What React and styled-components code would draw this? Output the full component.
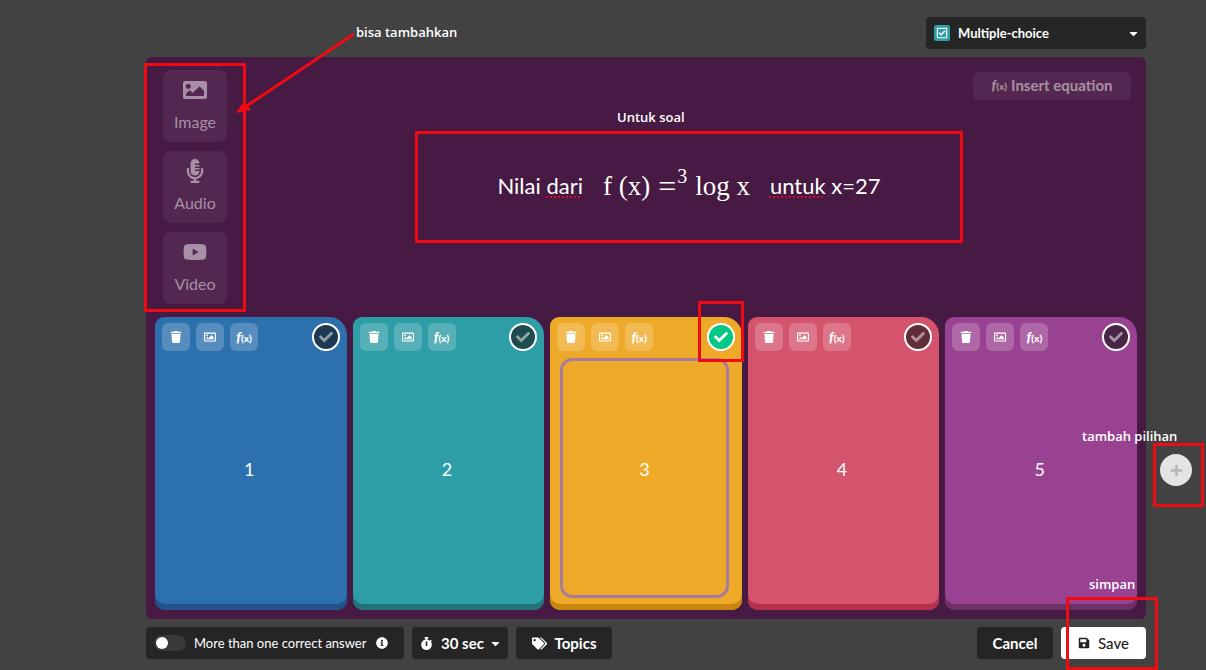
import React from "react";
import styled, { createGlobalStyle } from "styled-components";
import {
  FaCaretDown,
  FaCheck,
  FaImage,
  FaInfoCircle,
  FaMicrophoneAlt,
  FaPlus,
  FaRegCheckSquare,
  FaRegImage,
  FaSave,
  FaStopwatch,
  FaTags,
  FaTrash,
  FaYoutube,
} from "react-icons/fa";

const GlobalStyle = createGlobalStyle`
  *, *::before, *::after { box-sizing: border-box; }
  body {
    margin: 0;
    background: #424242;
    color: #fff;
    font-family: Lato, "Liberation Sans", sans-serif;
  }
  button, select, input, textarea { font: inherit; color: inherit; }
  svg { flex: none; }
`;

const Page = styled.div`
  min-height: 100vh;
  padding: 17px 0 11px 146px;
  display: flex;
  flex-direction: column;
  gap: 8px;
`;

const TopBar = styled.header`
  display: flex;
  justify-content: flex-end;
  padding-right: 60px;
`;

const SelectBox = styled.label`
  display: flex;
  align-items: center;
  height: 32px;
  width: ${(p) => p.$width};
  padding: 0 6px 0 8px;
  gap: 8px;
  border-radius: 4px;
  background: #252525;
`;

const Select = styled.select`
  appearance: none;
  flex: 1;
  min-width: 0;
  margin-right: -8px;
  padding: 0;
  border: 0;
  outline: 0;
  background: transparent;
  font-size: ${(p) => p.$size};
  font-weight: 700;
`;

const TypeIcon = styled.span`
  display: grid;
  place-items: center;
  width: 16px;
  height: 16px;
  border-radius: 2px;
  background: #2d9da6;
  font-size: 12px;
`;

const Workspace = styled.main`
  flex: 1;
  display: flex;
`;

const Panel = styled.section`
  flex: 1;
  min-width: 0;
  display: flex;
  flex-direction: column;
  padding: 0 9px 9px;
  border-radius: 6px;
  background: #461a42;
`;

const Side = styled.aside`
  width: 60px;
  display: flex;
  flex-direction: column;
  justify-content: flex-end;
  align-items: center;
  padding-bottom: 133px;
`;

const Anchor = styled.div`
  position: relative;
`;

const AddButton = styled.button`
  display: grid;
  place-items: center;
  width: 32px;
  height: 32px;
  padding: 0;
  border: 0;
  border-radius: 50%;
  background: #e4e4e4;
  color: #b4b4b4;
  font-size: 13px;
`;

const Frame = styled.div`
  position: absolute;
  inset: ${(p) => p.$inset};
  border: 3px solid #f00a12;
  border-radius: 1px;
  pointer-events: none;
  z-index: 2;
`;

const Note = styled.span`
  position: absolute;
  top: ${(p) => p.$top};
  left: ${(p) => p.$left};
  font: 600 13px/16px "Open Sans", sans-serif;
  white-space: nowrap;
  pointer-events: none;
  z-index: 3;
`;

const Arrow = styled.svg`
  position: absolute;
  top: -40px;
  left: 68px;
  width: 130px;
  height: 90px;
  pointer-events: none;
  z-index: 2;
`;

const Question = styled.div`
  display: flex;
  gap: 20px;
  padding: 13px 6px 13px 8px;
`;

const MediaList = styled.div`
  position: relative;
  display: flex;
  flex-direction: column;
  gap: 9px;
`;

const MediaButton = styled.button`
  display: flex;
  flex-direction: column;
  align-items: center;
  gap: 10px;
  width: 64px;
  height: 72px;
  padding: 8px 0 0;
  border: 0;
  border-radius: 8px;
  background: #522850;
  color: #a98fa6;
  font-size: 16px;
  line-height: 20px;
`;

const QuestionBody = styled.div`
  flex: 1;
  display: grid;
  grid-template-rows: 1fr auto 1fr;
`;

const EquationButton = styled.button`
  justify-self: end;
  align-self: start;
  display: flex;
  align-items: center;
  justify-content: center;
  gap: 4px;
  width: 158px;
  height: 28px;
  margin-top: 2px;
  padding: 0 6px 2px;
  border: 0;
  border-radius: 6px;
  background: #522850;
  color: #a98fa6;
  font-size: 15px;
  font-weight: 700;
  white-space: nowrap;
`;

const Fx = styled.span`
  font-size: 14px;
  font-style: italic;
  font-weight: 900;
  line-height: 16px;
  small { font-size: 10px; font-style: normal; }
`;

const EditorBox = styled.div`
  position: relative;
  justify-self: center;
  width: 100%;
  max-width: 548px;
  height: 112px;
`;

const Editor = styled.div`
  height: 100%;
  display: flex;
  align-items: center;
  justify-content: center;
  gap: 20px;
  padding-bottom: 3px;
  outline: 0;
  font-size: 22px;
  line-height: 28px;
  white-space: nowrap;
`;

const Misspelt = styled.span`
  text-decoration: underline dotted #c8102e 2px;
  text-underline-offset: 3px;
  text-decoration-skip-ink: none;
`;

const Formula = styled.span`
  display: flex;
  align-items: center;
  gap: 8px;
  font-family: "Liberation Serif", serif;
  font-size: 27px;
`;

const Equals = styled.span`
  display: flex;
  align-items: center;
  gap: 1px;
  font-size: 32px;
  sup {
    font-size: 20px;
    line-height: 20px;
    padding-bottom: 20px;
    vertical-align: baseline;
  }
`;

const Answers = styled.div`
  flex: 1;
  display: grid;
  grid-template-columns: repeat(5, 1fr);
  gap: 6px;
`;

const Tile = styled.article`
  min-height: 292px;
  display: flex;
  flex-direction: column;
  gap: 7px;
  padding: 6px 7px 12px;
  border-radius: 9px 18px 10px 10px;
  background: ${(p) => p.$color};
  box-shadow: inset 0 -6px ${(p) => p.$edge};
`;

const TileBar = styled.div`
  display: flex;
  gap: 6px;
`;

const ToolButton = styled.button`
  display: grid;
  place-items: center;
  width: 28px;
  height: 28px;
  padding: 0;
  border: 0;
  border-radius: 6px;
  background: rgba(255, 255, 255, 0.2);
  font-size: 12px;
`;

const CheckHolder = styled.div`
  position: relative;
  margin-left: auto;
`;

const CheckButton = styled.button`
  display: grid;
  place-items: center;
  width: 28px;
  height: 28px;
  padding: 0;
  border: 2px solid #fff;
  border-radius: 50%;
  background: ${(p) => (p.$on ? "#00c985" : "rgba(20, 20, 20, 0.6)")};
  color: ${(p) => (p.$on ? "#fff" : "rgba(255, 255, 255, 0.5)")};
  font-size: 14px;
`;

const AnswerField = styled.label`
  flex: 1;
  display: flex;
  align-items: center;
  margin: 0 6px 0 3px;
  padding-bottom: 18px;
  border: 3px solid ${(p) => (p.$focused ? "#a87c9c" : "transparent")};
  border-radius: 12px;
`;

const AnswerText = styled.textarea`
  width: 100%;
  height: 24px;
  padding: 0;
  border: 0;
  outline: 0;
  resize: none;
  overflow: hidden;
  background: transparent;
  text-align: center;
  font-size: 18px;
  line-height: 24px;
`;

const Footer = styled.footer`
  display: flex;
  gap: 8px;
  padding-right: 60px;
`;

const Spacer = styled.div`
  flex: 1;
`;

const ToggleBox = styled.label`
  display: flex;
  align-items: center;
  width: 258px;
  height: 32px;
  padding: 0 16px 0 8px;
  gap: 8px;
  border-radius: 4px;
  background: #252525;
  font-size: 13px;
  white-space: nowrap;
  svg { margin-left: auto; }
`;

const Toggle = styled.input`
  appearance: none;
  width: 32px;
  height: 16px;
  margin: 0;
  padding: 2px;
  border-radius: 8px;
  background: #383838;
  &::before {
    content: "";
    display: block;
    width: 12px;
    height: 12px;
    border-radius: 50%;
    background: #fff;
  }
  &:checked::before { margin-left: auto; }
`;

const ActionButton = styled.button`
  display: flex;
  align-items: center;
  justify-content: center;
  gap: 8px;
  width: ${(p) => p.$width};
  height: 32px;
  padding: 0;
  border: 0;
  border-radius: 4px;
  background: ${(p) => (p.$light ? "#fff" : "#252525")};
  color: ${(p) => (p.$light ? "#222" : "#fff")};
  font-size: 15px;
  font-weight: ${(p) => (p.$light ? 500 : 700)};
`;

const answers = [
  { text: "1", color: "#2d70ae", edge: "#22528a" },
  { text: "2", color: "#2d9da6", edge: "#227278" },
  { text: "3", color: "#efa929", edge: "#c8860f", correct: true },
  { text: "4", color: "#d5546d", edge: "#b6304b" },
  { text: "5", color: "#9a4292", edge: "#6f3068" },
];

const FxMark = () => (
  <Fx>
    f<small>(x)</small>
  </Fx>
);

function AnswerTile({ text, color, edge, correct }) {
  return (
    <Tile $color={color} $edge={edge}>
      <TileBar>
        <ToolButton aria-label="Delete answer"><FaTrash /></ToolButton>
        <ToolButton aria-label="Add image"><FaRegImage /></ToolButton>
        <ToolButton aria-label="Add equation"><FxMark /></ToolButton>
        <CheckHolder>
          <CheckButton $on={correct} aria-label="Mark as correct" aria-pressed={!!correct}>
            <FaCheck />
          </CheckButton>
          {correct && <Frame $inset="-22px -9px -11px -9px" />}
        </CheckHolder>
      </TileBar>
      <AnswerField $focused={correct}>
        <AnswerText rows={1} defaultValue={text} aria-label={`Answer ${text}`} />
      </AnswerField>
    </Tile>
  );
}

export default function App() {
  return (
    <Page>
      <GlobalStyle />
      <TopBar>
        <SelectBox $width="220px">
          <TypeIcon><FaRegCheckSquare /></TypeIcon>
          <Select $size="13px" aria-label="Question type">
            <option>Multiple-choice</option>
          </Select>
          <FaCaretDown size={13} />
        </SelectBox>
      </TopBar>

      <Workspace>
        <Panel>
          <Question>
            <MediaList>
              <MediaButton><FaImage size={24} />Image</MediaButton>
              <MediaButton><FaMicrophoneAlt size={24} />Audio</MediaButton>
              <MediaButton><FaYoutube size={24} />Video</MediaButton>
              <Frame $inset="-7px -19px -8px -19px" />
              <Arrow viewBox="0 0 130 90">
                <path d="M123 4L14 77" stroke="#f00a12" strokeWidth="3" />
                <path d="M5 83L13 71L20 80Z" fill="#f00a12" />
              </Arrow>
              <Note $top="-46px" $left="193px">bisa tambahkan</Note>
            </MediaList>
            <QuestionBody>
              <EquationButton><FxMark />Insert equation</EquationButton>
              <EditorBox>
                <Editor
                  role="textbox"
                  aria-label="Question"
                  contentEditable
                  suppressContentEditableWarning
                  spellCheck={false}
                >
                  <span>Nilai <Misspelt>dari</Misspelt></span>
                  <Formula>
                    <span>f (x)</span>
                    <Equals>=<sup>3</sup></Equals>
                    <span>log x</span>
                  </Formula>
                  <span><Misspelt>untuk</Misspelt> x=27</span>
                </Editor>
                <Frame $inset="0" />
                <Note $top="-22px" $left="202px">Untuk soal</Note>
              </EditorBox>
            </QuestionBody>
          </Question>
          <Answers>
            {answers.map((a) => <AnswerTile key={a.text} {...a} />)}
          </Answers>
        </Panel>
        <Side>
          <Anchor>
            <AddButton aria-label="Add answer option"><FaPlus /></AddButton>
            <Frame $inset="-11px -12px -21px -7px" />
            <Note $top="-26px" $left="-78px">tambah pilihan</Note>
          </Anchor>
        </Side>
      </Workspace>

      <Footer>
        <ToggleBox>
          <Toggle type="checkbox" />
          More than one correct answer
          <FaInfoCircle size={12} />
        </ToggleBox>
        <SelectBox $width="96px">
          <FaStopwatch size={13} />
          <Select $size="15px" aria-label="Time limit">
            <option>30 sec</option>
          </Select>
          <FaCaretDown size={13} />
        </SelectBox>
        <ActionButton $width="96px"><FaTags size={15} />Topics</ActionButton>
        <Spacer />
        <ActionButton $width="76px">Cancel</ActionButton>
        <Anchor>
          <ActionButton $width="85px" $light><FaSave size={12} />Save</ActionButton>
          <Frame $inset="-30px -12px -11px 5px" />
          <Note $top="-51px" $left="28px">simpan</Note>
        </Anchor>
      </Footer>
    </Page>
  );
}
